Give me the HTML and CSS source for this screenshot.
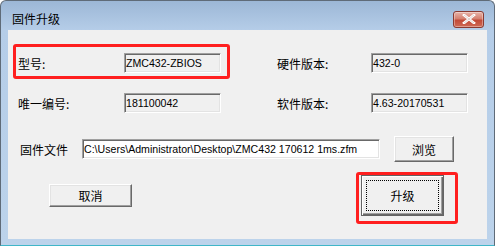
FILE: index.html
```html
<!DOCTYPE html>
<html lang="zh-CN">
<head>
  <meta charset="UTF-8">
  <title>固件升级</title>
  <link rel="stylesheet" href="styles.css">
</head>
<body>
  <div class="window">
    <div class="titlebar">
      <span class="title">固件升级</span>
      <button class="close-btn" aria-label="关闭">
        <svg width="14" height="10" viewBox="0 0 14 10">
          <path d="M2 1 L12 9 M12 1 L2 9" stroke="#fff" stroke-width="2.6" stroke-linecap="square"/>
          <path d="M2 1 L12 9 M12 1 L2 9" stroke="#6b2a22" stroke-width="0.6" fill="none" opacity="0.35"/>
        </svg>
      </button>
    </div>

    <div class="client">
      <!-- 信息区 -->
      <div class="info-grid">
        <label class="lbl">型号:</label>
        <div class="field">ZMC432-ZBIOS</div>
        <label class="lbl">硬件版本:</label>
        <div class="field">432-0</div>

        <label class="lbl">唯一编号:</label>
        <div class="field">181100042</div>
        <label class="lbl">软件版本:</label>
        <div class="field">4.63-20170531</div>
      </div>

      <!-- 固件文件 -->
      <div class="file-row">
        <label class="lbl file-lbl">固件文件</label>
        <div class="field file-field">C:\Users\Administrator\Desktop\ZMC432 170612 1ms.zfm</div>
        <button class="btn browse-btn">浏览</button>
      </div>

      <div class="action-row">
        <button class="btn cancel-btn">取消</button>
        <button class="btn default-btn"><span class="focus-rect">升级</span></button>
      </div>

      <!-- 红框标注 -->
      <div class="mark mark-model"></div>
      <div class="mark mark-upgrade"></div>
    </div>
  </div>
</body>
</html>
```

FILE: styles.css
```css
body {
  margin: 0;
  background-color: #fff;
  font-family: "Noto Sans CJK SC", "Liberation Sans", sans-serif;
  font-size: 12px;
  color: #000;
}

.window {
  width: 493px;
  height: 244px;
  border: 1px solid #5f6b78;
  border-bottom-color: #3fb6c8;
  border-radius: 6px 6px 0 0;
  background: linear-gradient(#9cb7d6 0, #b5cde8 29px, #bcd3eb 100%);
  display: flex;
  flex-direction: column;
}

.titlebar {
  height: 29px;
  display: flex;
  align-items: center;
  justify-content: space-between;
  padding: 0 10px 0 11px;
}

.title {
  font-size: 12px;
  margin-top: 6px;
}

.close-btn {
  width: 31px;
  height: 17px;
  margin-top: 7px;
  padding: 0;
  border: 1px solid #8a3a31;
  border-radius: 3px;
  background: linear-gradient(#e7b3a9 0, #d5806f 45%, #c24a38 55%, #cf6a55 100%);
  box-shadow: inset 0 0 0 1px rgba(255, 255, 255, 0.35);
  display: flex;
  align-items: center;
  justify-content: center;
}

.client {
  position: relative;
  flex: 1;
  margin: 0 7px 6px 7px;
  background-color: #f0f0f0;
  padding-top: 23px;
}

.lbl {
  display: flex;
  align-items: center;
  white-space: nowrap;
}

.field {
  box-sizing: border-box;
  height: 20px;
  border: 1px solid;
  border-color: #a0a0a0 #fff #fff #a0a0a0;
  box-shadow: inset 1px 1px 0 #696969, inset -1px -1px 0 #e3e3e3;
  background-color: #f0f0f0;
  padding: 0 1px;
  font-family: "Liberation Sans", sans-serif;
  font-size: 10.6px;
  line-height: 18px;
  white-space: nowrap;
  overflow: hidden;
}

.info-grid {
  display: grid;
  grid-template-columns: 106px 97px 56px 94px 97px;
  grid-template-rows: 20px 20px;
  row-gap: 20px;
  padding-left: 10px;
}

.info-grid .lbl:nth-of-type(2),
.info-grid .lbl:nth-of-type(4) {
  grid-column: 4;
}

.file-row {
  display: flex;
  align-items: center;
  height: 26px;
  margin-top: 23px;
  padding-left: 12px;
}

.file-lbl {
  width: 62px;
}

.file-field {
  width: 298px;
  background-color: #fff;
}

.btn {
  box-sizing: border-box;
  padding: 0;
  font-family: "Noto Sans CJK SC", sans-serif;
  font-size: 12px;
  color: #000;
  background-color: #f0f0f0;
  border: 1px solid;
  border-color: #fff #696969 #696969 #fff;
  box-shadow: inset -1px -1px 0 #a0a0a0, inset 1px 1px 0 #e3e3e3;
}

.browse-btn {
  width: 60px;
  height: 26px;
  margin-left: 14px;
}

.action-row {
  display: flex;
  align-items: center;
  height: 41px;
  margin-top: 13px;
}

.cancel-btn {
  width: 83px;
  height: 23px;
  margin-left: 41px;
}

.default-btn {
  width: 83px;
  height: 41px;
  margin-left: 229px;
  border: 1px solid #646464;
  box-shadow: inset 1px 1px 0 #fff, inset -1px -1px 0 #696969, inset -2px -2px 0 #a0a0a0;
  padding: 4px;
}

.focus-rect {
  display: flex;
  align-items: center;
  justify-content: center;
  height: 100%;
  box-sizing: border-box;
  border: 1px dotted #000;
}

/* 标注用红框 */
.mark {
  position: absolute;
  border: 3px solid #ff1f1f;
  border-radius: 3px;
  box-sizing: border-box;
}

.mark-model {
  left: 5px;
  top: 14px;
  width: 217px;
  height: 35px;
}

.mark-upgrade {
  left: 348px;
  top: 142px;
  width: 102px;
  height: 52px;
}
```
